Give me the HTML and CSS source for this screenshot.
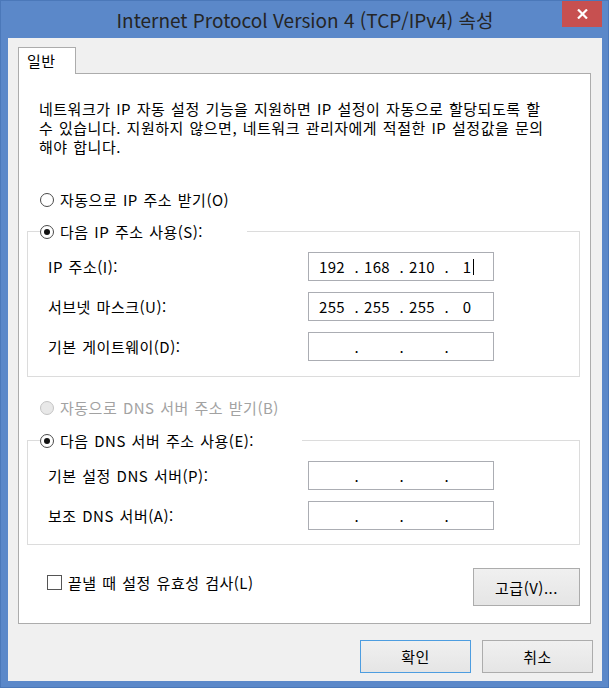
FILE: index.html
```html
<!DOCTYPE html>
<html lang="ko">
<head>
<meta charset="utf-8">
<title>Internet Protocol Version 4 (TCP/IPv4) 속성</title>
<link rel="stylesheet" href="styles.css">
</head>
<body>
<div class="window">
  <div class="titlebar">
    <div></div>
    <div class="title">Internet Protocol Version 4 (TCP/IPv4) 속성</div>
    <div class="tb-right">
      <button class="close" aria-label="닫기">
        <svg width="11" height="10" viewBox="0 0 11 10"><path d="M1 0.5 L10 9.5 M10 0.5 L1 9.5" stroke="#fff" stroke-width="2.2" fill="none"/></svg>
      </button>
    </div>
  </div>
  <div class="client">
    <div class="tabs">
      <div class="tab">일반</div>
      <div class="tab-fill"></div>
    </div>
    <div class="panel">
      <p class="desc">네트워크가 IP 자동 설정 기능을 지원하면 IP 설정이 자동으로 할당되도록 할<br>수 있습니다. 지원하지 않으면, 네트워크 관리자에게 적절한 IP 설정값을 문의<br>해야 합니다.</p>

      <div class="radio-row"><span class="radio"></span><span>자동으로 IP 주소 받기(O)</span></div>

      <fieldset class="group">
        <legend class="lg-ip"><span class="legend-inner"><span class="radio checked"></span><span>다음 IP 주소 사용(S):</span></span></legend>
        <div class="rows">
          <span class="label">IP 주소(I):</span>
          <div class="ipbox">
            <span class="seg">192</span><span class="dot">.</span>
            <span class="seg">168</span><span class="dot">.</span>
            <span class="seg">210</span><span class="dot">.</span>
            <span class="seg">1<span class="caret"></span></span>
          </div>
          <span class="label">서브넷 마스크(U):</span>
          <div class="ipbox">
            <span class="seg">255</span><span class="dot">.</span>
            <span class="seg">255</span><span class="dot">.</span>
            <span class="seg">255</span><span class="dot">.</span>
            <span class="seg">0</span>
          </div>
          <span class="label">기본 게이트웨이(D):</span>
          <div class="ipbox">
            <span class="seg"></span><span class="dot">.</span>
            <span class="seg"></span><span class="dot">.</span>
            <span class="seg"></span><span class="dot">.</span>
            <span class="seg"></span>
          </div>
        </div>
      </fieldset>

      <div class="radio-row disabled dns-auto"><span class="radio"></span><span>자동으로 DNS 서버 주소 받기(B)</span></div>

      <fieldset class="group dns">
        <legend class="lg-dns"><span class="legend-inner"><span class="radio checked"></span><span>다음 DNS 서버 주소 사용(E):</span></span></legend>
        <div class="rows">
          <span class="label">기본 설정 DNS 서버(P):</span>
          <div class="ipbox">
            <span class="seg"></span><span class="dot">.</span>
            <span class="seg"></span><span class="dot">.</span>
            <span class="seg"></span><span class="dot">.</span>
            <span class="seg"></span>
          </div>
          <span class="label">보조 DNS 서버(A):</span>
          <div class="ipbox">
            <span class="seg"></span><span class="dot">.</span>
            <span class="seg"></span><span class="dot">.</span>
            <span class="seg"></span><span class="dot">.</span>
            <span class="seg"></span>
          </div>
        </div>
      </fieldset>

      <div class="bottom-row">
        <div class="check-row"><span class="check"></span><span>끝낼 때 설정 유효성 검사(L)</span></div>
        <button class="btn adv">고급(V)...</button>
      </div>
    </div>
    <div class="buttons">
      <button class="btn dlg default">확인</button>
      <button class="btn dlg">취소</button>
    </div>
  </div>
</div>
</body>
</html>
```

FILE: styles.css
```css
html, body {
  margin: 0;
  background: #ffffff;
}

body {
  font-family: "Noto Sans CJK KR", "Noto Sans", sans-serif;
  font-size: 15px;
  color: #000;
}

.window {
  box-sizing: border-box;
  width: 609px;
  height: 688px;
  background: #5b88c9;
  border: 1px solid #4b78b9;
  padding: 0 6px 6px 7px;
  display: flex;
  flex-direction: column;
}

.titlebar {
  height: 37px;
  flex: none;
  display: grid;
  grid-template-columns: 1fr auto 1fr;
  align-items: center;
}

.title {
  font-size: 19px;
  line-height: 1;
  color: #252525;
  white-space: nowrap;
  padding-bottom: 1px;
}

.tb-right {
  justify-self: end;
  align-self: start;
}

.close {
  width: 40px;
  height: 26px;
  border: none;
  padding: 0;
  margin: 0;
  background: #c75050;
  display: flex;
  align-items: center;
  justify-content: center;
}

.client {
  flex: 1;
  background: #f0f0f0;
  display: flex;
  flex-direction: column;
  padding: 9px 9px 8px 10px;
  letter-spacing: 0.5px;
  word-spacing: 1px;
}

.tabs {
  display: flex;
  height: 27px;
  flex: none;
  margin-right: 2px;
}

.tab {
  box-sizing: border-box;
  width: 58px;
  height: 27px;
  border: 1px solid #acacac;
  border-bottom: none;
  background: #fff;
  padding-left: 8px;
  line-height: 26px;
}

.tab-fill {
  flex: 1;
  border-bottom: 1px solid #acacac;
}

.panel {
  flex: 1;
  background: #fff;
  border: 1px solid #acacac;
  border-top: none;
  padding: 25px 10px 0 8px;
  margin-right: 2px;
}

.desc {
  margin: 0 0 0 12px;
  line-height: 19px;
  white-space: nowrap;
}

.radio-row {
  display: flex;
  align-items: center;
  gap: 6px;
  height: 19px;
  margin: 34px 0 0 13px;
}

.radio-row.dns-auto {
  margin-top: 21px;
}

.radio {
  box-sizing: border-box;
  flex: none;
  width: 14px;
  height: 14px;
  border: 1px solid #4a4a4a;
  border-radius: 50%;
  background: #fff;
  display: inline-flex;
  align-items: center;
  justify-content: center;
}

.radio.checked::after {
  content: "";
  width: 6px;
  height: 6px;
  border-radius: 50%;
  background: #111;
}

.radio-row.disabled {
  color: #a2a2a2;
}

.radio-row.disabled .radio {
  border-color: #c4c4c4;
  background: #e8e8e8;
}

.group {
  margin: 13px 0 0 0;
  border: 1px solid #dcdcdc;
  padding: 11px 0 15px 12px;
  min-width: 0;
}

.group.dns {
  margin-top: 14px;
  padding-bottom: 14px;
}

.group legend {
  padding: 0;
  margin: 0;
  box-sizing: border-box;
}

.lg-ip {
  width: 207px;
}

.lg-dns {
  width: 262px;
}

.legend-inner {
  display: flex;
  align-items: center;
  gap: 6px;
  height: 19px;
}

.rows {
  margin-left: 8px;
  display: grid;
  grid-template-columns: 260px 186px;
  row-gap: 11px;
  align-items: center;
}

.label {
  line-height: 19px;
  white-space: nowrap;
}

.ipbox {
  box-sizing: border-box;
  height: 29px;
  border: 1px solid #abadb3;
  background: #fff;
  display: flex;
  align-items: center;
  padding-left: 5px;
  line-height: 19px;
  letter-spacing: 0.3px;
}

.seg {
  width: 36px;
  height: 19px;
  text-align: center;
  position: relative;
}

.dot {
  width: 9px;
  text-align: right;
}

.caret {
  position: absolute;
  left: 24px;
  top: 2px;
  width: 1px;
  height: 16px;
  background: #000;
}

.bottom-row {
  display: flex;
  justify-content: space-between;
  align-items: flex-start;
  margin-top: 23px;
}

.check-row {
  display: flex;
  align-items: center;
  gap: 6px;
  height: 19px;
  margin: 5px 0 0 20px;
}

.check {
  box-sizing: border-box;
  width: 15px;
  height: 15px;
  border: 1px solid #555;
  background: #fff;
}

.btn {
  box-sizing: border-box;
  border: 1px solid #acacac;
  background: linear-gradient(#f0f0f0, #e5e5e5);
  font: inherit;
  letter-spacing: inherit;
  color: #000;
  padding: 0;
  margin: 0;
}

.btn.adv {
  width: 107px;
  height: 38px;
}

.buttons {
  display: flex;
  justify-content: flex-end;
  gap: 11px;
  margin-top: 16px;
  flex: none;
}

.btn.dlg {
  width: 111px;
  height: 33px;
}

.btn.default {
  border-color: #4d9de0;
}
```
